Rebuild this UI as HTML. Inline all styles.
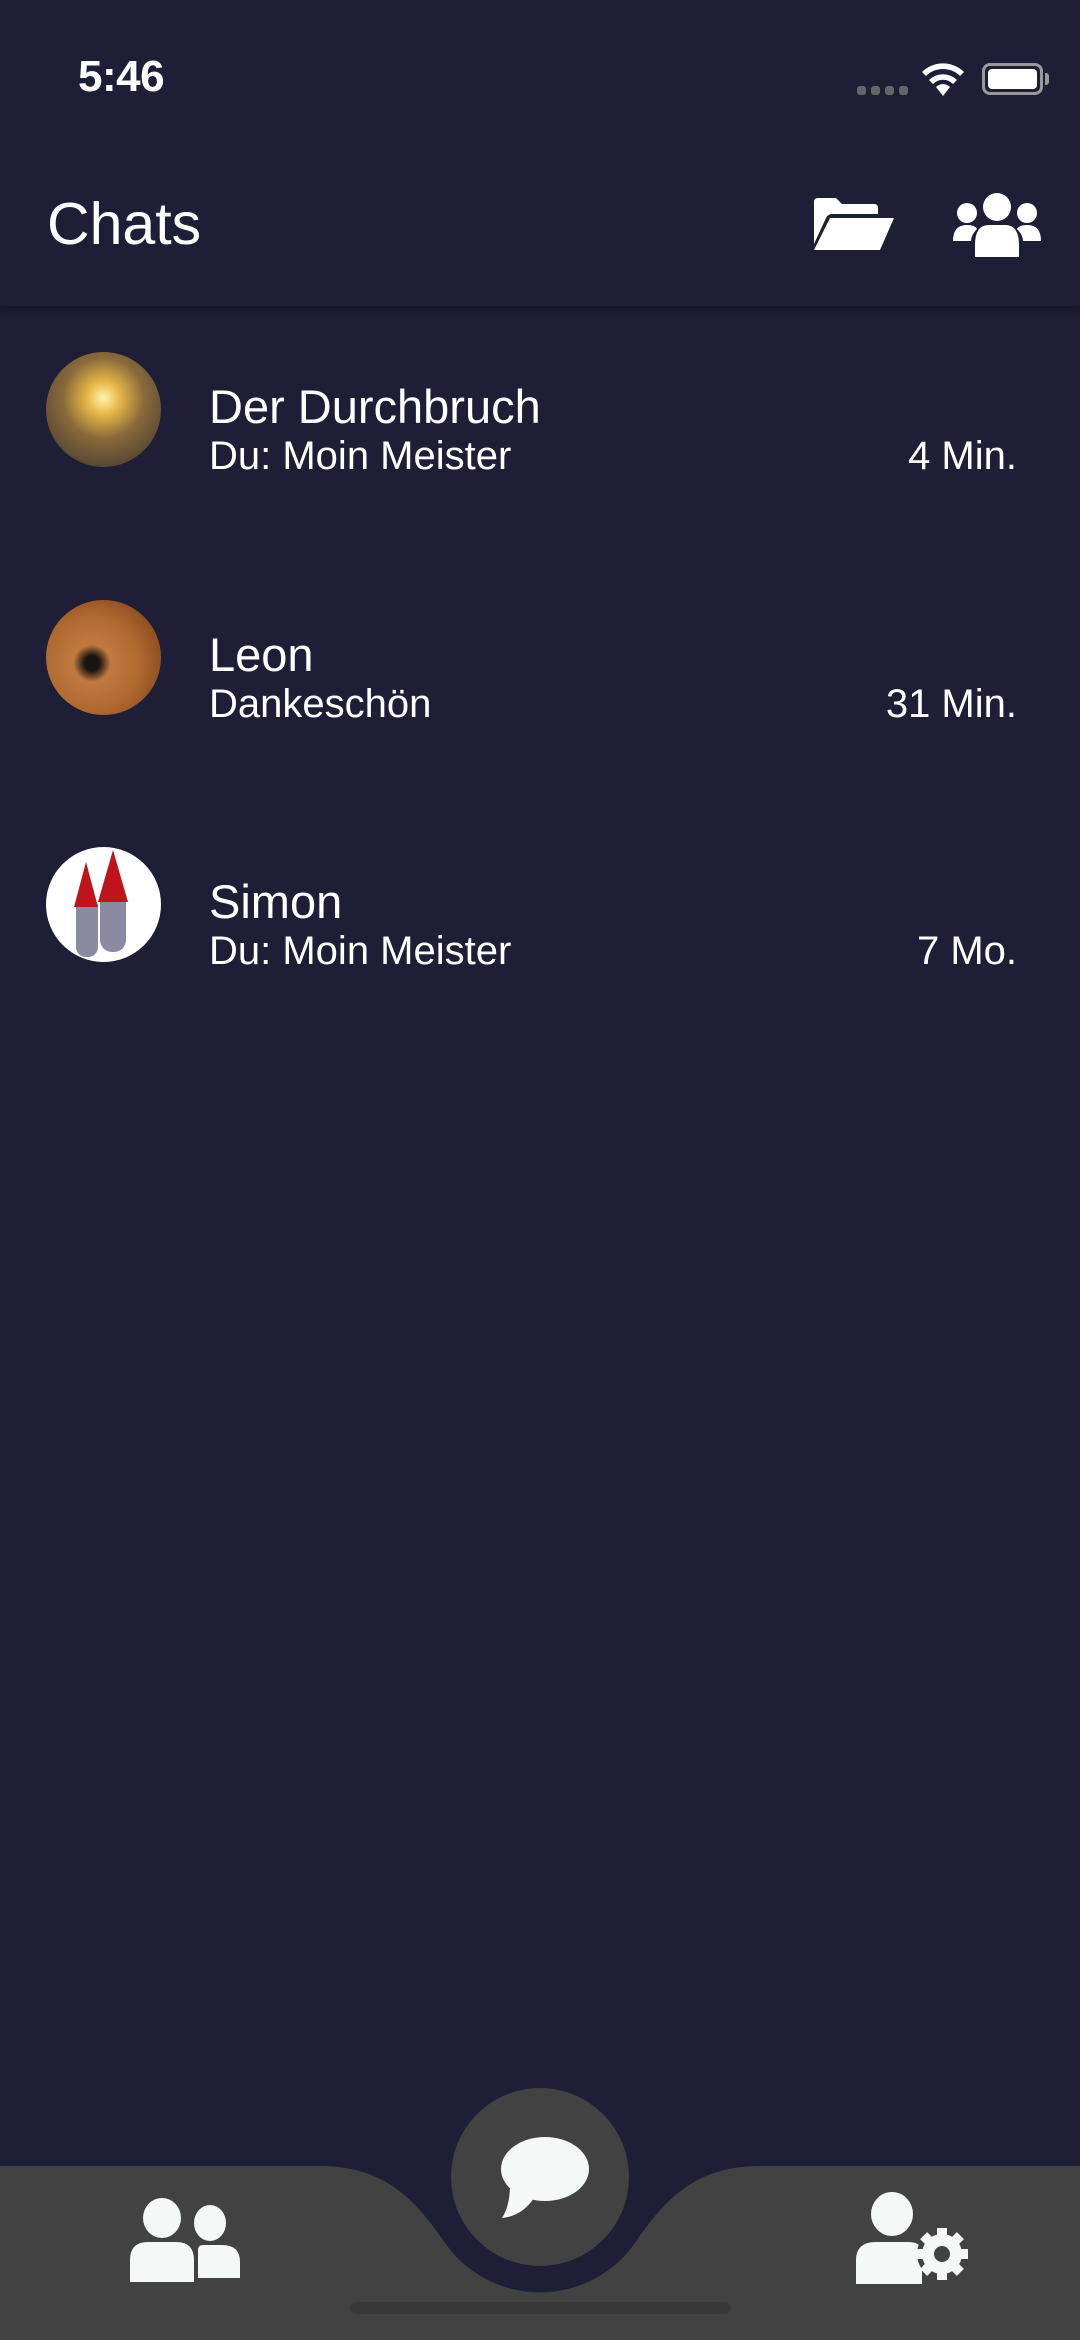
<!DOCTYPE html>
<html><head><meta charset="utf-8"><style>
*{margin:0;padding:0;box-sizing:border-box}
body{width:1080px;height:2340px;background:#1e1e36;font-family:"Liberation Sans",sans-serif;color:#fff;position:relative;overflow:hidden}
.abs{position:absolute}
.header{position:absolute;left:0;top:0;width:1080px;height:306px;background:#1e1e36;box-shadow:0 4px 10px rgba(0,0,0,.35)}
.t{position:absolute;white-space:nowrap;line-height:1}
.av{position:absolute;left:46px;width:115px;height:115px;border-radius:50%;overflow:hidden}
</style></head><body>
<div class="header"></div>
<div class="t" style="left:78px;top:55px;font-size:44px;font-weight:bold;letter-spacing:-0.5px">5:46</div>
<div class="abs" style="left:857px;top:86px;width:52px;height:9px">
 <span class="abs" style="left:0;width:9px;height:9px;border-radius:3px;background:#666;"></span>
 <span class="abs" style="left:14px;width:9px;height:9px;border-radius:3px;background:#666;"></span>
 <span class="abs" style="left:28px;width:9px;height:9px;border-radius:3px;background:#666;"></span>
 <span class="abs" style="left:42px;width:9px;height:9px;border-radius:3px;background:#666;"></span>
</div>
<svg class="abs" style="left:922px;top:62px" width="42" height="34" viewBox="0 0 42 34"><path d="M21 34 L14 25 A10 10 0 0 1 28 25 Z" fill="#fff"/><path d="M7 18 A20 20 0 0 1 35 18 L31 22 A14 14 0 0 0 11 22Z" fill="#fff"/><path d="M0 10 A30 30 0 0 1 42 10 L38 14 A24 24 0 0 0 4 14Z" fill="#fff"/></svg>
<div class="abs" style="left:982px;top:63px;width:61px;height:32px;border:3px solid #999;border-radius:8px;padding:3px"><div style="width:100%;height:100%;background:#fff;border-radius:4px"></div></div>
<div class="abs" style="left:1045px;top:73px;width:4px;height:12px;background:#999;border-radius:0 3px 3px 0"></div>
<div class="t" style="left:47px;top:195px;font-size:59px">Chats</div>
<svg class="abs" style="left:814px;top:198px" width="80" height="52" viewBox="0 0 80 52"><path d="M0 4 Q0 0 4 0 H22 L28 6 H60 Q64 6 64 10 V16 H18 Q14 16 12 20 L0 46 Z" fill="#fff"/><path d="M16 20 H80 L66 52 H0 Z" fill="#fff"/></svg>
<svg class="abs" style="left:953px;top:193px" width="88" height="64" viewBox="0 0 88 64"><circle cx="44" cy="14" r="14" fill="#fff"/><circle cx="14" cy="20" r="10" fill="#fff"/><circle cx="74" cy="20" r="10" fill="#fff"/><path d="M0 48 Q0 32 14 32 Q22 32 24 36 Q18 42 18 48 Z" fill="#fff"/><path d="M88 48 Q88 32 74 32 Q66 32 64 36 Q70 42 70 48 Z" fill="#fff"/><path d="M22 64 V52 Q22 32 36 32 H52 Q66 32 66 52 V64 Z" fill="#fff"/></svg>

<div class="av" style="top:352px;background:radial-gradient(circle at 50% 40%,#fff4b0 0,#e8b848 18%,#8a6a3a 45%,#5a4a34 75%,#3a3428 100%)"></div>
<div class="t" style="left:209px;top:383px;font-size:47px">Der Durchbruch</div>
<div class="t" style="left:209px;top:436px;font-size:40px">Du: Moin Meister</div>
<div class="t" style="right:63px;top:436px;font-size:40px">4 Min.</div>

<div class="av" style="top:600px;background:radial-gradient(circle at 40% 55%,#1a1410 0,#1a1410 8%,#c07a40 20%,#b06a30 50%,#8a4a20 80%,#6a3a18 100%)"></div>
<div class="t" style="left:209px;top:631px;font-size:47px">Leon</div>
<div class="t" style="left:209px;top:684px;font-size:40px">Dankeschön</div>
<div class="t" style="right:63px;top:684px;font-size:40px">31 Min.</div>

<div class="av" style="top:847px;background:#fff">
 <div class="abs" style="left:30px;top:50px;width:22px;height:60px;background:#8a8aa0;border-radius:10px"></div>
 <div class="abs" style="left:54px;top:40px;width:26px;height:65px;background:#8a8aa0;border-radius:12px"></div>
 <div class="abs" style="left:28px;top:15px;width:0;height:0;border-left:12px solid transparent;border-right:12px solid transparent;border-bottom:45px solid #c0141c"></div>
 <div class="abs" style="left:52px;top:3px;width:0;height:0;border-left:15px solid transparent;border-right:15px solid transparent;border-bottom:52px solid #c0141c"></div>
</div>
<div class="t" style="left:209px;top:878px;font-size:47px">Simon</div>
<div class="t" style="left:209px;top:931px;font-size:40px">Du: Moin Meister</div>
<div class="t" style="right:63px;top:931px;font-size:40px">7 Mo.</div>

<svg class="abs" style="left:0;top:2160px" width="1080" height="180" viewBox="0 0 1080 180">
 <rect x="0" y="6" width="1080" height="174" fill="#424242"/>
 <path d="M320 6 C385 6 415 40 443 80 A116 116 0 0 0 637 80 C665 40 695 6 760 6 Z" fill="#1e1e36"/>
 <rect x="350" y="142" width="381" height="12" rx="6" fill="#383838"/>
</svg>
<div class="abs" style="left:451px;top:2088px;width:178px;height:178px;border-radius:50%;background:#424242"></div>
<svg class="abs" style="left:500px;top:2136px" width="90" height="82" viewBox="0 0 90 82"><ellipse cx="45" cy="33" rx="44" ry="32" fill="#f4f9f7"/><path d="M10 48 Q10 70 2 82 Q22 80 34 62 Z" fill="#f4f9f7"/></svg>
<svg class="abs" style="left:130px;top:2198px" width="112" height="84" viewBox="0 0 112 84"><ellipse cx="32" cy="20" rx="19" ry="20" fill="#f4f9f7"/><path d="M0 84 V62 Q0 44 18 44 H46 Q64 44 64 62 V84 Z" fill="#f4f9f7"/><ellipse cx="80" cy="25" rx="16" ry="18" fill="#f4f9f7"/><path d="M68 80 V52 Q68 47 73 47 H92 Q110 47 110 64 V80 Z" fill="#f4f9f7"/></svg>
<svg class="abs" style="left:856px;top:2192px" width="116" height="96" viewBox="0 0 116 96"><ellipse cx="36" cy="22" rx="21" ry="22" fill="#f4f9f7"/><path d="M0 92 V68 Q0 50 20 50 H52 Q64 50 66 58 V92 Z" fill="#f4f9f7"/><g transform="translate(86,62)"><circle r="25" fill="#424242"/><circle r="20" fill="#f4f9f7"/><g fill="#f4f9f7"><rect x="-5" y="-26" width="10" height="52"/><rect x="-26" y="-5" width="52" height="10"/><rect x="-5" y="-26" width="10" height="52" transform="rotate(45)"/><rect x="-5" y="-26" width="10" height="52" transform="rotate(-45)"/></g><circle r="8" fill="#424242"/></g></svg>
</body></html>
